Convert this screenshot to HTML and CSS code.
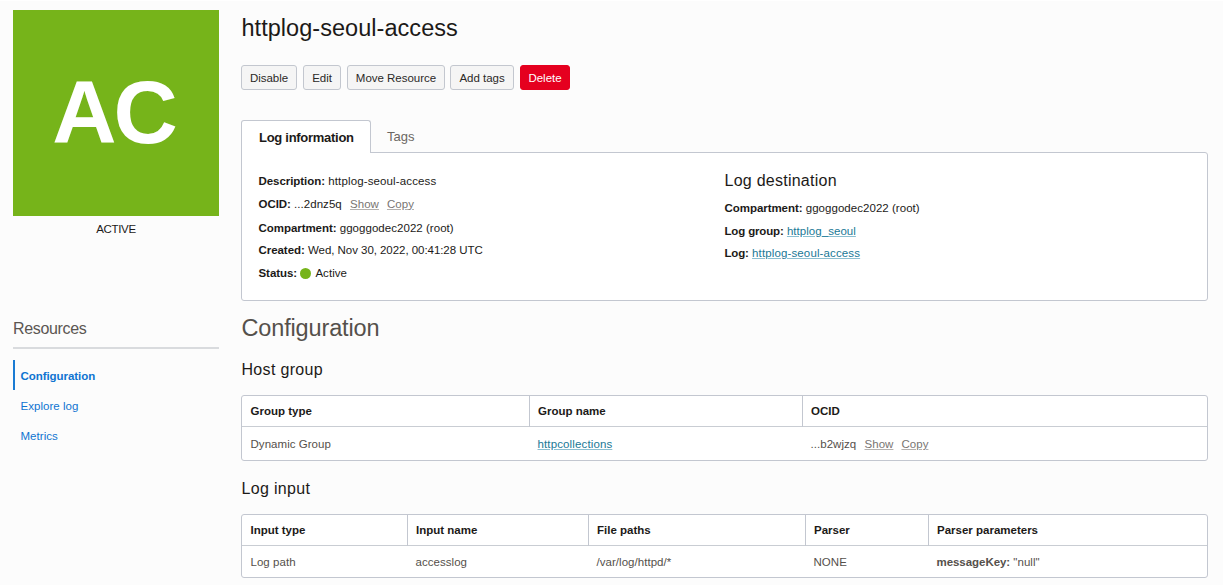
FILE: index.html
```html
<!DOCTYPE html>
<html lang="en">
<head>
<meta charset="utf-8">
<title>httplog-seoul-access</title>
<link rel="stylesheet" href="styles.css">
</head>
<body>
<div class="page">
  <aside class="sidebar">
    <div class="badge">AC</div>
    <div class="badge-state">ACTIVE</div>
    <h2 class="side-title">Resources</h2>
    <nav class="side-nav">
      <a class="side-link is-current">Configuration</a>
      <a class="side-link">Explore log</a>
      <a class="side-link">Metrics</a>
    </nav>
  </aside>
  <main class="main">
    <h1 class="title">httplog-seoul-access</h1>
    <div class="actions">
      <button class="btn btn-disable">Disable</button>
      <button class="btn btn-edit">Edit</button>
      <button class="btn btn-move">Move Resource</button>
      <button class="btn btn-tags">Add tags</button>
      <button class="btn btn-delete">Delete</button>
    </div>
    <div class="tabs">
      <div class="tab is-active">Log information</div>
      <div class="tab">Tags</div>
    </div>
    <section class="panel">
      <div class="panel-left">
        <p class="row"><b>Description:</b> <span class="resource-name">httplog-seoul-access</span></p>
        <p class="row row-ocid"><b>OCID:</b> <span class="ocid">...2dnz5q <a class="mini">Show</a><a class="mini">Copy</a></span></p>
        <p class="row"><b>Compartment:</b> ggoggodec2022 (root)</p>
        <p class="row"><b>Created:</b> <span class="date">Wed, Nov 30, 2022, 00:41:28 UTC</span></p>
        <p class="row"><b>Status:</b> <span class="dot"></span>Active</p>
      </div>
      <div class="panel-right">
        <h3 class="dest-title">Log destination</h3>
        <p class="row"><b>Compartment:</b> ggoggodec2022 (root)</p>
        <p class="row"><b class="tight">Log group:</b> <a class="link">httplog_seoul</a></p>
        <p class="row"><b class="tight">Log:</b> <a class="link resource-name">httplog-seoul-access</a></p>
      </div>
    </section>
    <h2 class="section-title">Configuration</h2>
    <h3 class="sub-title sub-host">Host group</h3>
    <div class="table table-host">
      <div class="tr th"><div>Group type</div><div>Group name</div><div>OCID</div></div>
      <div class="tr td"><div>Dynamic Group</div><div><a class="link resource-name">httpcollections</a></div><div>...b2wjzq <a class="mini">Show</a><a class="mini">Copy</a></div></div>
    </div>
    <h3 class="sub-title sub-input">Log input</h3>
    <div class="table table-input">
      <div class="tr th"><div>Input type</div><div>Input name</div><div>File paths</div><div>Parser</div><div>Parser parameters</div></div>
      <div class="tr td"><div>Log path</div><div>accesslog</div><div>/var/log/httpd/*</div><div>NONE</div><div><b>messageKey:</b> "null"</div></div>
    </div>
  </main>
</div>
</body>
</html>
```

FILE: styles.css
```css
* { box-sizing: border-box; margin: 0; padding: 0; }
html { background: #fff; }
body {
  font: 11.5px/16px "Liberation Sans", Arial, sans-serif;
  letter-spacing: 0.04px;
  color: #1c1a18;
  overflow: hidden;
}
b { letter-spacing: -0.05px; }
b.tight { letter-spacing: -0.15px; }
.page {
  display: flex;
  gap: 22px;
  width: 1223px;
  height: 584px;
  margin-top: 1px;
  padding: 9px 15px 0 13px;
  background: #fcfcfc;
}
.sidebar { width: 206px; flex: none; }
.badge {
  height: 206px;
  padding-right: 5px;
  background: #76b41a;
  color: #fff;
  font-size: 89px;
  font-weight: bold;
  line-height: 204px;
  letter-spacing: -3px;
  text-align: center;
}
.badge-state { margin-top: 5px; letter-spacing: -0.35px; text-align: center; }
.side-title {
  margin-top: 82px;
  padding-bottom: 8px;
  border-bottom: 2px solid #d9dbde;
  color: #5b5652;
  font-size: 16px;
  font-weight: normal;
  letter-spacing: -0.35px;
  line-height: 20px;
}
.side-nav { display: flex; flex-direction: column; margin-top: 11px; }
.side-link {
  height: 30px;
  padding-left: 5.5px;
  border-left: 2px solid transparent;
  color: #0f74d1;
  line-height: 32px;
}
.side-link.is-current { border-left-color: #1a7bd3; font-weight: bold; letter-spacing: -0.06px; }

.main { flex: 1; min-width: 0; }
.title { padding-left: 0.5px; color: #1c1a18; font-size: 23.5px; font-weight: normal; line-height: 36px; }
.actions { display: flex; gap: 6px; margin-top: 19px; }
.btn {
  height: 25px;
  padding-top: 1px;
  border: 1px solid #c3c7cf;
  border-radius: 3px;
  background: #f5f5f5;
  color: #2b2927;
  font: inherit;
  letter-spacing: -0.02px;
  line-height: 22px;
  white-space: nowrap;
}
.btn-disable { width: 56px; }
.btn-edit { width: 38px; }
.btn-move { width: 98px; }
.btn-tags { width: 64px; margin-left: -1px; }
.btn-delete { width: 50px; border-color: #e5001f; background: #e5001f; color: #fff; }

.tabs { display: flex; margin-top: 30px; height: 33px; }
.tab { padding-left: 16px; color: #6b6763; font-size: 13px; line-height: 33px; }
.tab.is-active {
  position: relative;
  z-index: 1;
  width: 130px;
  padding-left: 17px;
  border: 1px solid #c3c7d0;
  border-bottom: 0;
  border-radius: 3px 3px 0 0;
  background: #fff;
  color: #1c1a18;
  font-weight: bold;
  letter-spacing: -0.28px;
}
.panel {
  display: flex;
  height: 149px;
  margin-top: -1px;
  border: 1px solid #c3c7d0;
  border-radius: 0 3px 3px 3px;
  background: #fff;
}
.panel-left { width: 466px; padding: 20px 0 0 16.5px; }
.panel-right { padding: 17px 0 0 16.5px; }
.row { margin-bottom: 6.5px; white-space: nowrap; }
.row-ocid { margin-bottom: 8px; }
.date { letter-spacing: -0.05px; }
.resource-name { letter-spacing: 0.13px; }
.mini { margin-left: 5px; color: #797572; text-decoration: underline; text-decoration-color: #b4b1ae; text-underline-offset: 1px; }
.mini + .mini { margin-left: 8px; }
.link { color: #1a7896; text-decoration: underline; text-decoration-color: #8cbfd0; text-underline-offset: 1px; }
.dot {
  display: inline-block;
  width: 11px;
  height: 11px;
  margin-right: 4px;
  border-radius: 50%;
  background: #76b41a;
  vertical-align: -2px;
}
.dest-title { margin-bottom: 8px; font-size: 16px; font-weight: normal; letter-spacing: 0.25px; line-height: 22px; }
.section-title { margin-top: 12px; padding-left: 0.5px; color: #55504b; font-size: 23.5px; font-weight: normal; letter-spacing: -0.15px; line-height: 30px; }
.sub-title { padding-left: 0.5px; font-size: 16px; font-weight: normal; letter-spacing: 0.32px; line-height: 20px; }
.sub-host { margin-top: 17px; }
.sub-input { margin-top: 18px; }
.table { border: 1px solid #c3c7d0; border-radius: 3px; background: #fff; }
.table-host { margin-top: 15px; }
.table-input { margin-top: 15px; }
.tr { display: grid; }
.table-host .tr { grid-template-columns: 287px 273px 1fr; }
.table-input .tr { grid-template-columns: 165px 181px 217px 123px 1fr; }
.tr > div { padding-left: 8.5px; white-space: nowrap; }
.th { height: 31px; border-bottom: 1px solid #c9cdd3; font-weight: bold; letter-spacing: 0; line-height: 31px; }
.th > div + div { padding-left: 8px; border-left: 1px solid #c3c7d0; }
.td { height: 33px; color: #55504b; line-height: 34px; }
.table-input .td { height: 31px; line-height: 32px; }
```
